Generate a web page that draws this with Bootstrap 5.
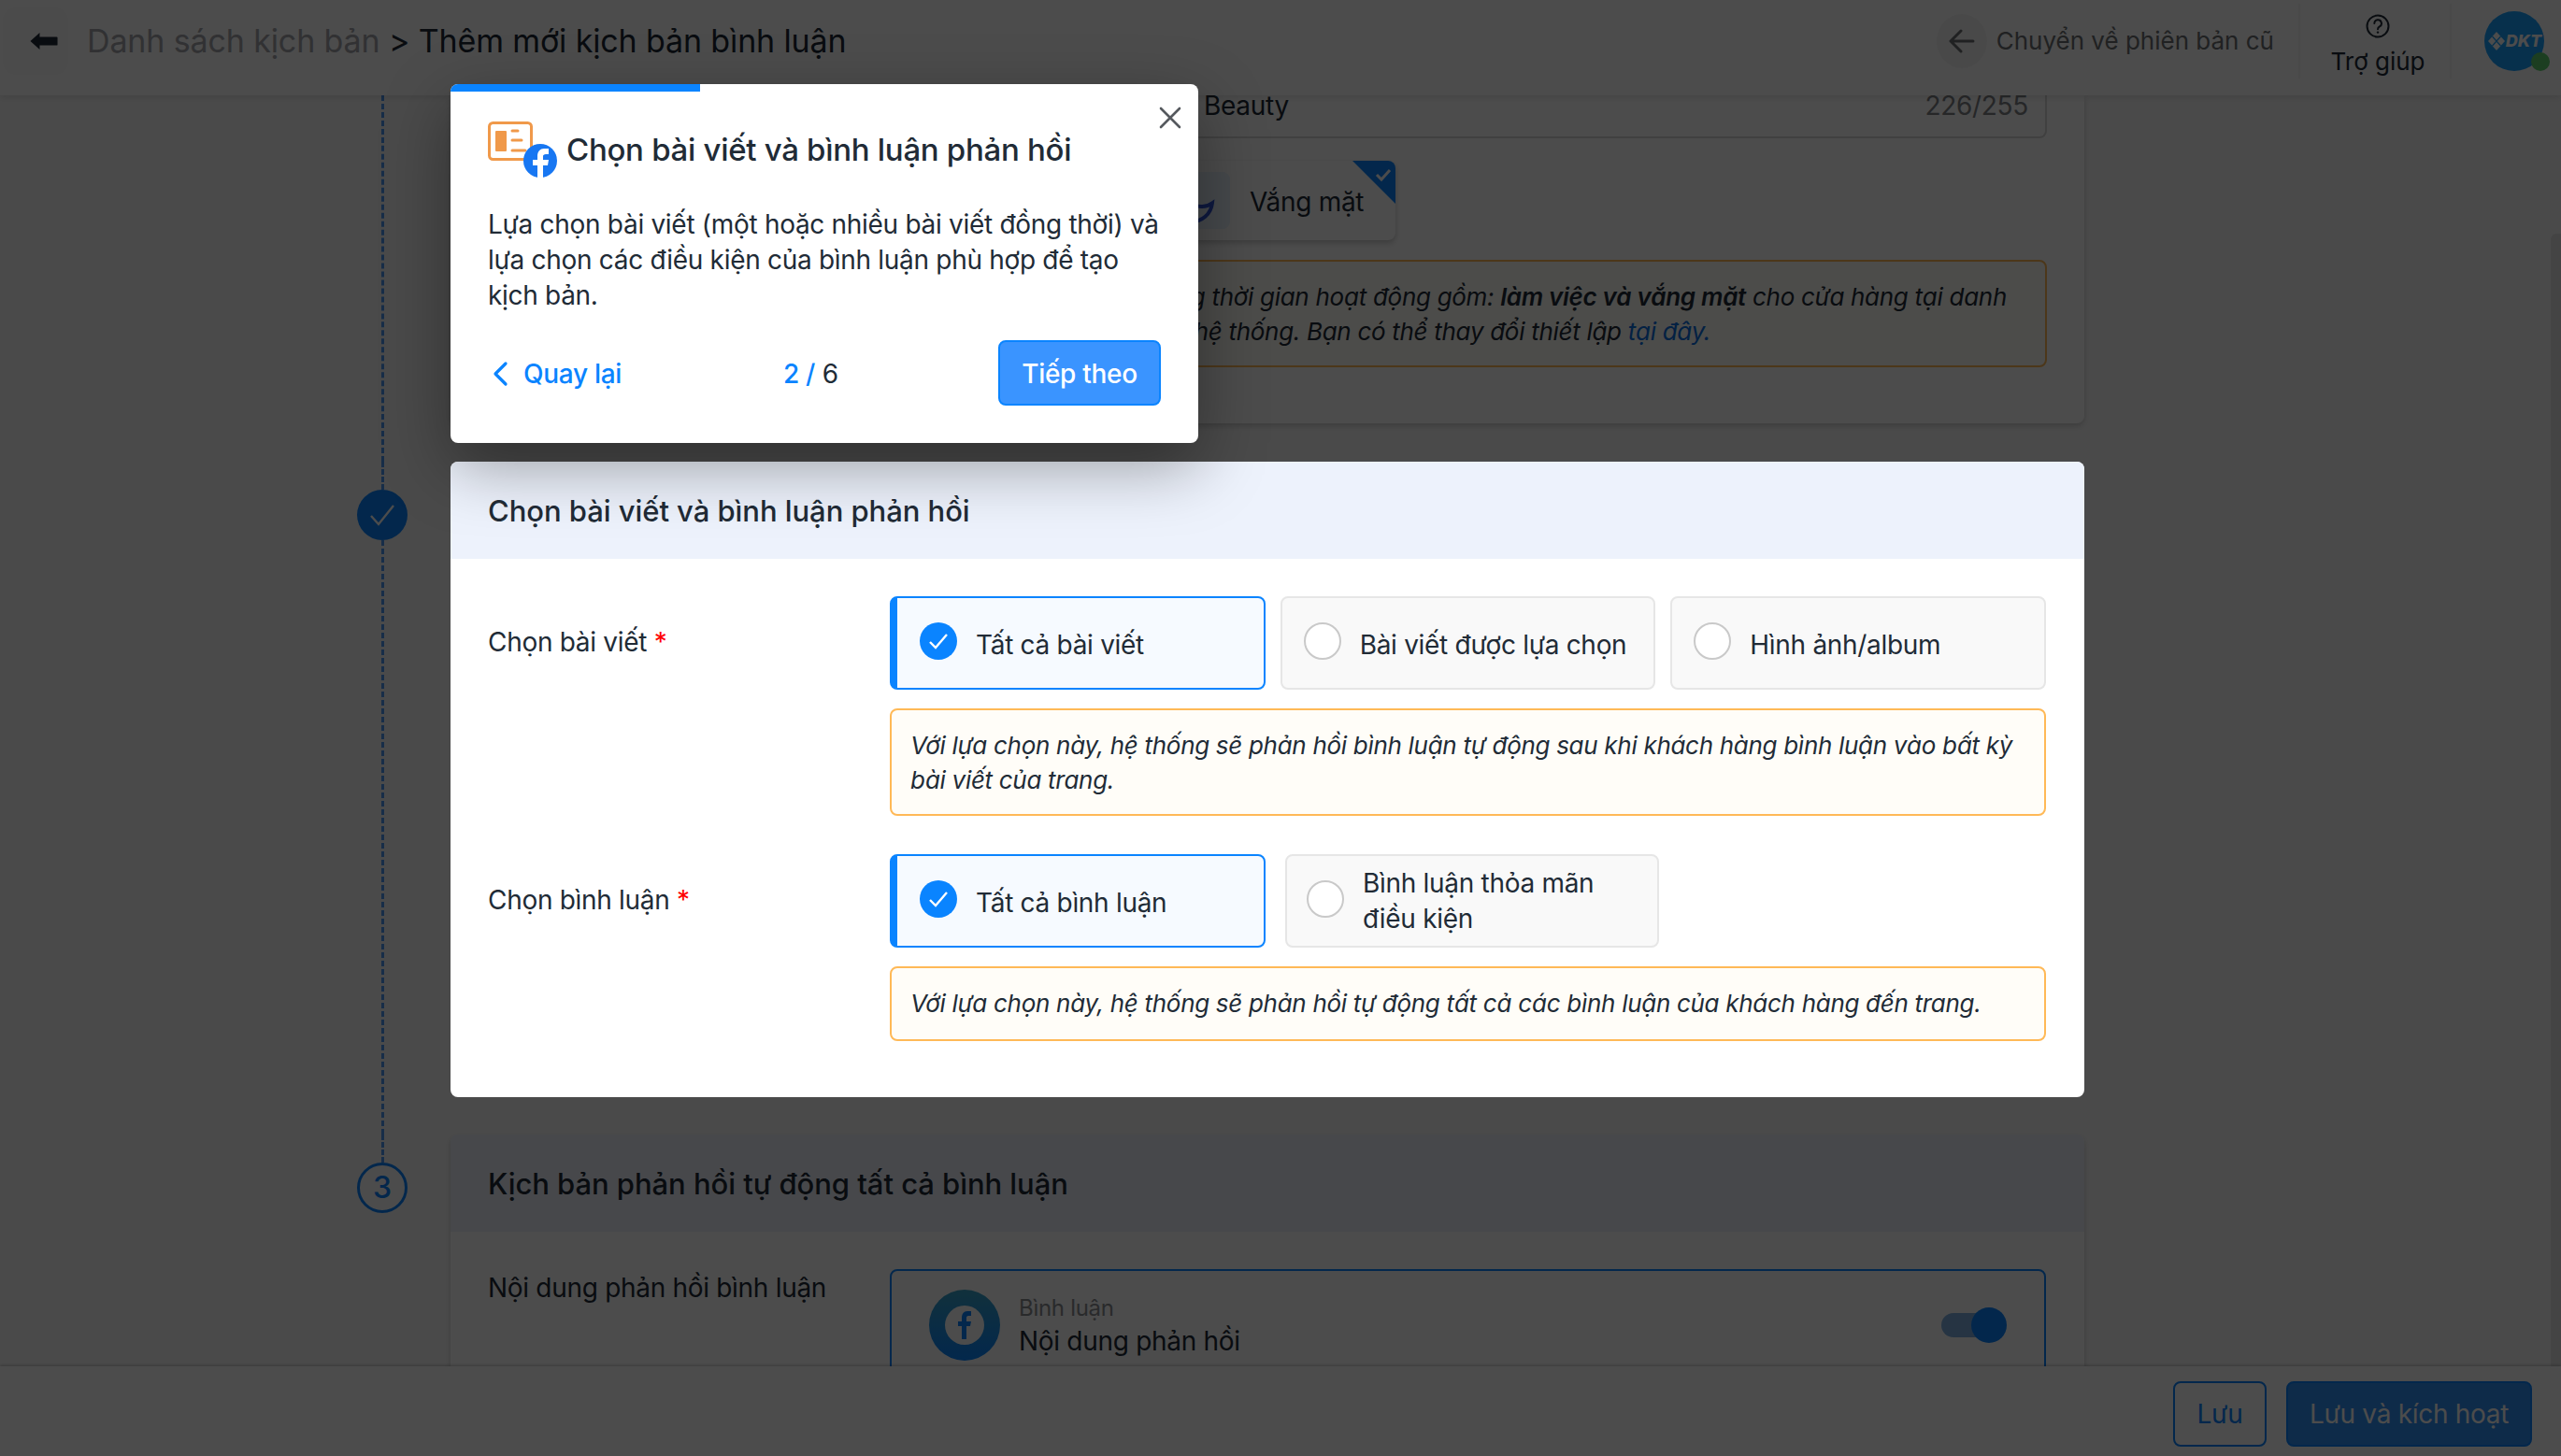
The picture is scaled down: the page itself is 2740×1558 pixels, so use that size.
<!DOCTYPE html>
<html lang="vi">
<head>
<meta charset="utf-8">
<title>Thêm mới kịch bản bình luận</title>
<link rel="stylesheet" href="https://cdn.jsdelivr.net/npm/bootstrap@5.3.0/dist/css/bootstrap.min.css">
<style>
html,body{height:100%;overflow:hidden}
body{font-family:Inter,"Noto Sans",sans-serif;font-size:28px;line-height:38px;letter-spacing:-.3px;color:#212b36;background:#f9f9f9}
.shell{height:1558px;position:relative}
.topbar{height:102px;background:#fff;box-shadow:0 2px 8px rgba(0,0,0,.12);position:relative;z-index:5;flex:none;padding-bottom:14px}
.backbox{width:70px;height:72px;margin-left:3px;padding-left:29px;background:#fbfbfb;border-radius:14px;flex:none}
.crumb{font-size:34px;line-height:44px;margin-left:20px;letter-spacing:-.13px}
.crumb-muted{color:#a3a6aa}
.round-back{width:54px;height:58px;border-radius:50%;background:#f6f6f6;flex:none}
.old-link{color:#6d6f72;margin-left:10px;font-size:26px;letter-spacing:0}
.vline{width:2px;height:80px;background:#f3f3f3;flex:none}
.old-wrap{margin-right:26px}
.help{width:160px;font-size:26px;line-height:34px;letter-spacing:0;color:#212b36;flex:none;padding-left:6px;padding-top:10px}
.avatar{width:64px;height:64px;border-radius:50%;background:#1aa0ff;position:relative;margin-left:35px;margin-right:18px;flex:none}
.av-dot{position:absolute;width:20px;height:20px;border-radius:50%;background:#5fd070;right:-6px;bottom:0}
.av-txt{font-size:18px;line-height:18px;font-weight:800;font-style:italic;letter-spacing:0;color:#fff}
.mainarea{height:1360px;overflow:hidden;padding-left:382px;flex:none}
.steprow{width:1848px}
.rail{width:54px;margin-right:46px;flex:none}
.dash{width:0;border-left:3px dashed #4f97f0;flex:none}
.dash-grow{flex:1 1 auto}
.dash-top{height:30px}
.dot{width:54px;height:54px;border-radius:50%;flex:none}
.dot-done{background:#0a84ff}
.dot-todo{border:3px solid #0a84ff;background:#fff;color:#0a84ff;font-size:32px;font-weight:500}
.panel{width:1748px;background:#fff;border-radius:8px;box-shadow:0 3px 6px rgba(0,0,0,.18)}
.panel-first{height:351px;padding:0 40px;border-radius:0 0 8px 8px}
.pad1{padding-bottom:41px}
.pad2{padding-bottom:40px}
.inputline{height:46px;margin-left:430px;border:2px solid #d8d8d8;border-top:0;border-radius:0 0 8px 8px;padding:0 18px 0 334px;color:#212b36;line-height:22px}
.inputline-count{color:#7f8286}
.mode-row{margin-top:24px;height:85px;width:971px}
.mode{width:282px;height:85px;background:#fff;border-radius:8px;box-shadow:0 3px 6px rgba(0,0,0,.22);position:relative;padding-left:21px;flex:none}
.mode-ico{width:84px;height:61px;background:#eaf3ff;border-radius:8px;flex:none;margin-right:21px}
.mode-lab{margin-top:2px}
.mode-tri{position:absolute;right:0;top:0;width:46px;height:46px;overflow:hidden;border-top-right-radius:8px}
.hint{border:2px solid #ffb957;background:#fffdf8;border-radius:8px;padding:20px 20px 0;font-size:26px;line-height:36.5px;font-style:italic;margin-top:20px}
.hint-two{height:115px}
.hint-one{height:80px}
.hint-far{margin-left:430px;margin-top:21px;overflow:hidden;white-space:nowrap}
.hint-end1{text-align:right;padding-right:21px}
.hint-end2{text-align:right;padding-right:338px}
.hint-link{color:#0a6fe0}
.spot{position:relative;z-index:20;box-shadow:none}
.panel-head{height:104px;background:#edf2fc;padding:2px 40px 0;font-size:31px;letter-spacing:-.05px;border-radius:8px 8px 0 0;font-weight:500}
.panel-body2{padding:40px 40px 60px}
.lab{width:430px;flex:none;line-height:38px;padding-top:30px}
.lab-plain{padding-top:1px}
.req{color:#f00}
.col-main{width:1237px;flex:none}
.opts{display:grid;grid-template-columns:repeat(3,1fr);gap:16px}
.opts-two{grid-template-columns:402px 400px;gap:21px}
.opt{height:100px;border:2px solid #e6e6e6;border-radius:8px;background:#f9f9f9;padding-left:23px}
.opts-two .opt{padding-left:21px}
.opts .opt-on,.opts-two .opt-on{border-color:#0a84ff;border-left-width:8px;background:#f6faff;padding-left:24px}
.tick{width:40px;height:40px;border-radius:50%;flex:none;margin-right:20px;margin-top:-4px}
.tick-on{background:#0a84ff}
.tick-off{background:#fff;border:2px solid #c9c9c9}
.opt-txt{margin-top:4px}
.opt-txt-two{margin-top:0}
.gap34{margin-top:41px}
.sec3{padding:40px 40px 0}
.fbbox{height:180px;border:2px solid #0a84ff;border-radius:8px;padding:20px 40px}
.fbring{width:76px;height:76px;border-radius:50%;background:linear-gradient(180deg,#3aa3c8,#0a84ff);flex:none;margin-right:20px}
.fbcore{width:42px;height:42px;border-radius:50%;background:#fff}
.fbtext{margin-top:4px}
.fbsmall{font-size:24px;line-height:32px;color:#8b8e92}
.tgl{width:70px;height:38px;position:relative;flex:none;margin-top:19px}
.tgl-track{position:absolute;left:0;top:6px;width:50px;height:26px;border-radius:13px;background:#7fb0e0}
.tgl-knob{position:absolute;right:0;top:0;width:38px;height:38px;border-radius:50%;background:#0a84ff}
.botbar{height:96px;background:#fff;box-shadow:0 -1px 3px rgba(0,0,0,.25);position:relative;z-index:5;padding:6px 31px 0 0;gap:21px;flex:none}
.btn.act{height:70px;font-size:28px;line-height:38px;letter-spacing:-.3px;border-radius:8px;padding:0;display:flex;align-items:center;justify-content:center}
.btn.act-out{width:100px;border:2px solid #0a84ff;color:#0a84ff;background:#fff}
.btn.act-solid{width:263px;border:2px solid #0a84ff;color:#fff;background:#2f8ff5}
.veil{position:absolute;inset:0;background:rgba(0,0,0,.7);z-index:10}
.scrollthumb{position:absolute;right:0;top:250px;bottom:96px;width:11px;background:rgba(0,0,0,.08);border-radius:6px 0 0 0;z-index:4}
.tour{position:absolute;left:482px;top:90px;width:800px;height:384px;background:#fff;border-radius:8px;box-shadow:0 24px 70px rgba(0,0,0,.36);z-index:30;overflow:hidden;padding:0 40px}
.tour-bar{position:absolute;left:0;top:0;height:8px;background:#0a84ff}
.tour-x{position:absolute;right:18px;top:24px;width:24px;height:24px}
.tour-head{height:60px;margin-top:40px}
.tour-title{font-size:33px;line-height:44px;font-weight:500;margin-left:8px;letter-spacing:-.3px}
.tour-text{margin-top:31px;margin-bottom:0;line-height:38px;white-space:nowrap}
.tour-foot{margin-top:29px}
.back-link{color:#0a84ff;font-weight:500;width:146px;font-size:28px;padding-top:1px}
.count{width:57px;white-space:nowrap;margin-right:3px;padding-top:2px}
.count b{color:#0a84ff;font-weight:500}
.btn.next{width:174px;height:70px;background:#3a94ff;border:2px solid #0a84ff;border-radius:8px;color:#fff;font-size:28px;letter-spacing:-.3px;font-weight:500;padding:1px 0 0;display:flex;align-items:center;justify-content:center}
</style>
</head>
<body>
<div class="shell d-flex flex-column">
  <header class="topbar d-flex align-items-center">
    <div class="backbox d-flex align-items-center">
      <svg width="30" height="20" viewBox="0 0 32 22"><path d="M0 11 11 1v5h20a1 1 0 0 1 1 1v8a1 1 0 0 1-1 1H11v5z" fill="#212b36"/></svg>
    </div>
    <div class="crumb text-nowrap"><span class="crumb-muted">Danh sách kịch bản</span> &gt; Thêm mới kịch bản bình luận</div>
    <div class="d-flex align-items-center ms-auto">
      <div class="d-flex align-items-center old-wrap">
        <div class="round-back d-flex align-items-center justify-content-center">
          <svg width="28" height="28" viewBox="0 0 28 28" fill="none" stroke="#6d6f72" stroke-width="3" stroke-linecap="round" stroke-linejoin="round"><path d="M26 14H2M13 3 2 14l11 11"/></svg>
        </div>
        <div class="old-link text-nowrap">Chuyển về phiên bản cũ</div>
      </div>
      <div class="vline"></div>
      <div class="help d-flex flex-column align-items-center">
        <svg width="26" height="26" viewBox="0 0 26 26" fill="none" stroke="#212b36" stroke-width="2"><circle cx="13" cy="13" r="11.500"/><path d="M9.300 10a3.800 3.800 0 1 1 5.600 3.400c-1.200.7-1.900 1.400-1.900 2.800" stroke-linecap="round"/><circle cx="13" cy="19.600" r="1.200" fill="#212b36" stroke="none"/></svg>
        <span class="mt-2">Trợ giúp</span>
      </div>
      <div class="vline"></div>
      <div class="avatar d-flex align-items-center justify-content-center">
        <svg width="20" height="22" viewBox="0 0 20 22"><path d="M10 1l9 10-9 10-9-10z" fill="#fff"/><path d="M5.500 6l9 10M14.500 6l-9 10" stroke="#1aa0ff" stroke-width="1.200"/></svg>
        <span class="av-txt">DKT</span>
        <span class="av-dot"></span>
      </div>
    </div>
  </header>

  <main class="mainarea">
    <div class="steprow d-flex">
      <div class="rail d-flex flex-column align-items-center"><div class="dash dash-grow"></div></div>
      <div class="pad1">
      <section class="panel panel-first">
        <div class="inputline d-flex justify-content-between"><span>Beauty</span><span class="inputline-count">226/255</span></div>
        <div class="mode-row d-flex justify-content-end">
          <div class="mode d-flex align-items-center">
            <div class="mode-ico d-flex align-items-center justify-content-center">
              <svg width="56" height="56" viewBox="0 0 40 40" fill="none" stroke="#2f56d8" stroke-width="2.800" stroke-linecap="round"><path d="M20 4a16 16 0 1 0 16 20A13 13 0 0 1 20 4z" transform="rotate(-8 20 20)"/></svg>
            </div>
            <span class="mode-lab">Vắng mặt</span>
            <div class="mode-tri">
              <svg width="46" height="46" viewBox="0 0 46 46"><path d="M0 0h46v46z" fill="#0a84ff"/><path d="M26 15l5 5 9-10" fill="none" stroke="#fff" stroke-width="3"/></svg>
            </div>
          </div>
        </div>
        <div class="hint hint-two hint-far">
          <div class="hint-end1">Cài đặt khoảng thời gian hoạt động gồm: <b class="fw-semibold">làm việc và vắng mặt</b> cho cửa hàng tại danh</div>
          <div class="hint-end2">sách khung giờ của hệ thống. Bạn có thể thay đổi thiết lập <span class="hint-link">tại đây.</span></div>
        </div>
      </section>
      </div>
    </div>

    <div class="steprow d-flex">
      <div class="rail d-flex flex-column align-items-center">
        <div class="dash dash-top"></div>
        <div class="dot dot-done d-flex align-items-center justify-content-center">
          <svg width="30" height="26" viewBox="0 0 30 26" fill="none" stroke="#fff" stroke-width="2.400"><path d="M3 14l8 9L27 3"/></svg>
        </div>
        <div class="dash dash-grow"></div>
      </div>
      <div class="pad2">
      <section class="panel spot">
        <div class="panel-head d-flex align-items-center">Chọn bài viết và bình luận phản hồi</div>
        <div class="panel-body2">
          <div class="d-flex">
            <div class="lab">Chọn bài viết <span class="req">*</span></div>
            <div class="col-main">
              <div class="opts">
                <div class="opt opt-on d-flex align-items-center"><span class="tick tick-on d-flex align-items-center justify-content-center"><svg width="24" height="20" viewBox="0 0 24 20" fill="none" stroke="#fff" stroke-width="2.400"><path d="M3 11l6 6L21 3"/></svg></span><span class="opt-txt">Tất cả bài viết</span></div>
                <div class="opt d-flex align-items-center"><span class="tick tick-off"></span><span class="opt-txt">Bài viết được lựa chọn</span></div>
                <div class="opt d-flex align-items-center"><span class="tick tick-off"></span><span class="opt-txt">Hình ảnh/album</span></div>
              </div>
              <div class="hint hint-two">Với lựa chọn này, hệ thống sẽ phản hồi bình luận tự động sau khi khách hàng bình luận vào bất kỳ bài viết của trang.</div>
            </div>
          </div>
          <div class="d-flex gap34">
            <div class="lab">Chọn bình luận <span class="req">*</span></div>
            <div class="col-main">
              <div class="opts opts-two">
                <div class="opt opt-on d-flex align-items-center"><span class="tick tick-on d-flex align-items-center justify-content-center"><svg width="24" height="20" viewBox="0 0 24 20" fill="none" stroke="#fff" stroke-width="2.400"><path d="M3 11l6 6L21 3"/></svg></span><span class="opt-txt">Tất cả bình luận</span></div>
                <div class="opt d-flex align-items-center"><span class="tick tick-off"></span><span class="opt-txt-two">Bình luận thỏa mãn<br>điều kiện</span></div>
              </div>
              <div class="hint hint-one">Với lựa chọn này, hệ thống sẽ phản hồi tự động tất cả các bình luận của khách hàng đến trang.</div>
            </div>
          </div>
        </div>
      </section>
      </div>
    </div>

    <div class="steprow d-flex">
      <div class="rail d-flex flex-column align-items-center">
        <div class="dash dash-top"></div>
        <div class="dot dot-todo d-flex align-items-center justify-content-center">3</div>
      </div>
      <section class="panel">
        <div class="panel-head d-flex align-items-center">Kịch bản phản hồi tự động tất cả bình luận</div>
        <div class="sec3 d-flex">
          <div class="lab lab-plain">Nội dung phản hồi bình luận</div>
          <div class="col-main">
            <div class="fbbox d-flex align-items-start">
              <div class="fbring d-flex align-items-center justify-content-center">
                <div class="fbcore d-flex align-items-center justify-content-center">
                  <svg width="14" height="30" viewBox="0 0 14 30"><path d="M4 30V16H0v-5h4V7c0-4 2-7 6-7h4v5h-3c-1.500 0-2 1-2 2v4h5l-1 5H9v14z" fill="#0a84ff"/></svg>
                </div>
              </div>
              <div class="flex-grow-1 fbtext">
                <div class="fbsmall">Bình luận</div>
                <div>Nội dung phản hồi</div>
              </div>
              <div class="tgl"><span class="tgl-track"></span><span class="tgl-knob"></span></div>
            </div>
          </div>
        </div>
      </section>
    </div>
  </main>

  <footer class="botbar d-flex align-items-center justify-content-end">
    <button class="btn act act-out" type="button">Lưu</button>
    <button class="btn act act-solid" type="button">Lưu và kích hoạt</button>
  </footer>

  <div class="scrollthumb"></div>
  <div class="veil"></div>

  <div class="tour">
    <div class="tour-bar" style="width:33.33%"></div>
    <svg class="tour-x" viewBox="0 0 24 24" fill="none" stroke="#55595e" stroke-width="2.600" stroke-linecap="round"><path d="M2 2l20 20M22 2 2 22"/></svg>
    <div class="tour-head d-flex align-items-center">
      <svg width="76" height="60" viewBox="0 0 76 60" class="flex-none">
        <rect x="1.500" y="1.500" width="45" height="39" rx="4" fill="#fff" stroke="#f0994a" stroke-width="3"/>
        <rect x="8" y="10" width="12" height="22" rx="1" fill="#f0994a"/>
        <path d="M26 10h6M26 20h10M26 31h14" stroke="#f0994a" stroke-width="3" stroke-linecap="round"/>
        <circle cx="56" cy="42" r="18" fill="#1877f2"/>
        <path d="M53 60V47h-5v-6h5v-4c0-5 3-8 7-8h5v6h-3c-2 0-3 1-3 2v4h6l-1 6h-5v13z" fill="#fff"/>
      </svg>
      <div class="tour-title text-nowrap">Chọn bài viết và bình luận phản hồi</div>
    </div>
    <p class="tour-text">Lựa chọn bài viết (một hoặc nhiều bài viết đồng thời) và<br>lựa chọn các điều kiện của bình luận phù hợp để tạo<br>kịch bản.</p>
    <div class="tour-foot d-flex align-items-center justify-content-between">
      <div class="back-link d-flex align-items-center gap-3 text-nowrap">
        <svg width="18" height="28" viewBox="0 0 18 28" fill="none" stroke="#0a84ff" stroke-width="3.200" stroke-linecap="round" stroke-linejoin="round" class="ms-1"><path d="M15 3 4 14l11 11"/></svg>
        <span>Quay lại</span>
      </div>
      <div class="count"><b>2 /</b> 6</div>
      <button class="btn next" type="button">Tiếp theo</button>
    </div>
  </div>
</div>
</body>
</html>
